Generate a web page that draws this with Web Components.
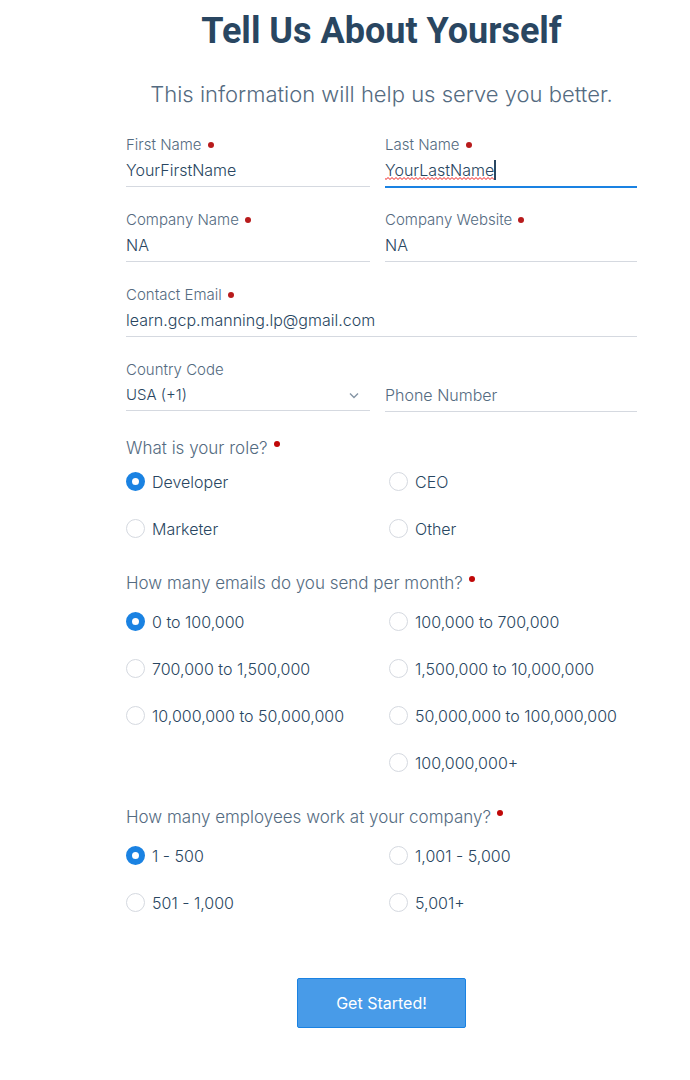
<!DOCTYPE html>
<html lang="en">
<head>
<meta charset="utf-8">
<meta name="viewport" content="width=device-width, initial-scale=1">
<title>Tell Us About Yourself</title>
<style>
  body { margin: 0; background: #fff; color: #294661; font-family: Inter, Roboto, "Liberation Sans", sans-serif; font-weight: 300; }
</style>
</head>
<body>
<signup-page>
  <page-intro>
    <span slot="title">Tell Us About Yourself</span>
    <span slot="lead">This information will help us serve you better.</span>
  </page-intro>
  <field-grid>
    <text-field label="First Name" value="YourFirstName" required></text-field>
    <text-field label="Last Name" value="YourLastName" required active></text-field>
    <text-field label="Company Name" value="NA" required></text-field>
    <text-field label="Company Website" value="NA" required></text-field>
    <text-field class="wide" label="Contact Email" value="learn.gcp.manning.lp@gmail.com" type="email" required></text-field>
    <select-field label="Country Code" value="USA (+1)"></select-field>
    <text-field placeholder="Phone Number" type="tel"></text-field>
  </field-grid>
  <radio-group name="role" legend="What is your role?" compact>
    <radio-option checked>Developer</radio-option>
    <radio-option>CEO</radio-option>
    <radio-option>Marketer</radio-option>
    <radio-option>Other</radio-option>
  </radio-group>
  <radio-group name="emails" legend="How many emails do you send per month?">
    <radio-option checked>0 to 100,000</radio-option>
    <radio-option>100,000 to 700,000</radio-option>
    <radio-option>700,000 to 1,500,000</radio-option>
    <radio-option>1,500,000 to 10,000,000</radio-option>
    <radio-option>10,000,000 to 50,000,000</radio-option>
    <radio-option>50,000,000 to 100,000,000</radio-option>
    <radio-option class="second">100,000,000+</radio-option>
  </radio-group>
  <radio-group name="employees" legend="How many employees work at your company?">
    <radio-option checked>1 - 500</radio-option>
    <radio-option>1,001 - 5,000</radio-option>
    <radio-option>501 - 1,000</radio-option>
    <radio-option>5,001+</radio-option>
  </radio-group>
  <submit-button>Get Started!</submit-button>
</signup-page>

<script>
const define = (name, html, setup) => {
  const template = document.createElement('template');
  template.innerHTML = html;
  customElements.define(name, class extends HTMLElement {
    connectedCallback() {
      if (this.shadowRoot) return;
      const root = this.attachShadow({ mode: 'open' });
      root.append(template.content.cloneNode(true));
      if (setup) setup(this, root);
    }
  });
};

define('signup-page', `
  <style>
    :host { display: block; }
    main { padding: 9px 53px 52px 126px; }
  </style>
  <main><slot></slot></main>`);

define('page-intro', `
  <style>
    :host { display: block; text-align: center; }
    h1 { margin: 0; font-family: Roboto, "Liberation Sans", sans-serif; font-size: 36px; line-height: 44px; font-weight: 700; }
    p { margin: 23px 0 0; font-size: 22px; line-height: 36px; color: #546b81; }
  </style>
  <h1><slot name="title"></slot></h1>
  <p><slot name="lead"></slot></p>`);

define('field-grid', `
  <style>
    :host { display: grid; grid-template-columns: 244fr 252fr; gap: 23px 15px; margin-top: 23px; }
    ::slotted(.wide) { grid-column: 1 / -1; }
  </style>
  <slot></slot>`);

const fieldCss = `
    :host { display: flex; flex-direction: column; }
    label { display: flex; align-items: center; gap: 6px; height: 20px; font-size: 15px; line-height: 20px; color: #546b81; }
    .dot { width: 6px; height: 6px; border-radius: 50%; background: #b81b1c; }
    [hidden] { display: none; }
    .box { display: flex; align-items: center; height: 30px; border-bottom: 1px solid #d5d9e0; }
    input, select { font: inherit; font-size: 16px; line-height: 20px; color: #294661; border: 0; outline: 0; margin: 0; padding: 0; background: none; border-radius: 0; width: 100%; min-width: 0; height: 20px; }
    ::placeholder { color: #546b81; opacity: 1; }`;

define('text-field', `
  <style>${fieldCss}
    .box { padding-bottom: 1px; }
    .caret { display: none; }
    :host([active]) .box { border-bottom: 2px solid #1a82e2; margin-bottom: -1px; }
    :host([active]) input {
      field-sizing: content; width: auto;
      background: url("data:image/svg+xml,%3Csvg xmlns='http://www.w3.org/2000/svg' width='4' height='3'%3E%3Cpath d='M-1 .5 1 2.5 3 .5 5 2.5' fill='none' stroke='%23f01818'/%3E%3C/svg%3E") repeat-x left bottom;
    }
    :host([active]) .caret { display: block; width: 2px; height: 20px; background: #294661; }
  </style>
  <label for="control"><span class="text"></span><span class="dot"></span></label>
  <div class="box"><input id="control" spellcheck="false"><span class="caret"></span></div>`,
  (host, root) => {
    const input = root.querySelector('input');
    const label = host.getAttribute('label');
    root.querySelector('.text').textContent = label || '';
    root.querySelector('.dot').hidden = !host.hasAttribute('required');
    input.type = host.getAttribute('type') || 'text';
    input.value = host.getAttribute('value') || '';
    input.placeholder = host.getAttribute('placeholder') || '';
    if (!label) input.setAttribute('aria-label', input.placeholder);
    input.required = host.hasAttribute('required');
  });

define('select-field', `
  <style>${fieldCss}
    .box { position: relative; }
    select { appearance: none; font-size: 15px; }
    svg { position: absolute; right: 11px; top: 12px; pointer-events: none; }
  </style>
  <label for="control"></label>
  <div class="box">
    <select id="control"><option></option></select>
    <svg width="10" height="8" viewBox="0 0 10 8" fill="none" stroke="#8595a5" stroke-width="1.4"><path d="M1 1.5 5 5.5 9 1.5"/></svg>
  </div>`,
  (host, root) => {
    root.querySelector('label').textContent = host.getAttribute('label');
    root.querySelector('option').textContent = host.getAttribute('value');
  });

define('radio-group', `
  <style>
    :host { display: block; margin-top: 30px; }
    :host([compact]) { margin-top: 24px; }
    fieldset { border: 0; margin: 0; padding: 0; min-width: 0; }
    legend { display: flex; gap: 6px; padding: 0; font-size: 17px; line-height: 24px; color: #546b81; }
    .dot { width: 6px; height: 6px; margin-top: 5px; border-radius: 50%; background: #c00808; }
    .options { display: grid; grid-template-columns: 263fr 248fr; row-gap: 23px; margin-top: 15px; }
    :host([compact]) .options { margin-top: 10px; }
    ::slotted(.second) { grid-column: 2; }
  </style>
  <fieldset>
    <legend><span class="text"></span><span class="dot"></span></legend>
    <div class="options"><slot></slot></div>
  </fieldset>`,
  (host, root) => { root.querySelector('.text').textContent = host.getAttribute('legend'); });

define('radio-option', `
  <style>
    :host { display: block; }
    label { display: flex; align-items: center; gap: 7px; height: 24px; font-size: 16px; line-height: 24px; white-space: nowrap; }
    input { appearance: none; flex: none; box-sizing: border-box; width: 19px; height: 19px; margin: 0 0 2px; border: 1px solid #d5d9e0; border-radius: 50%; background: #fff; }
    input:checked { border: 6px solid #1a82e2; }
  </style>
  <label><input type="radio"><span><slot></slot></span></label>`,
  (host, root) => {
    const input = root.querySelector('input');
    input.name = host.parentElement.getAttribute('name');
    input.checked = host.hasAttribute('checked');
    input.addEventListener('change', () => {
      for (const other of host.parentElement.children) {
        if (other !== host) other.shadowRoot.querySelector('input').checked = false;
      }
    });
  });

define('submit-button', `
  <style>
    :host { display: flex; justify-content: center; margin-top: 63px; }
    button { font: inherit; font-size: 16px; line-height: 24px; font-weight: 400; color: #fff; padding: 12px 38px; border: 1px solid #1a82e2; border-radius: 2px; background: #489be8; }
  </style>
  <button type="button"><slot></slot></button>`);
</script>
</body>
</html>
